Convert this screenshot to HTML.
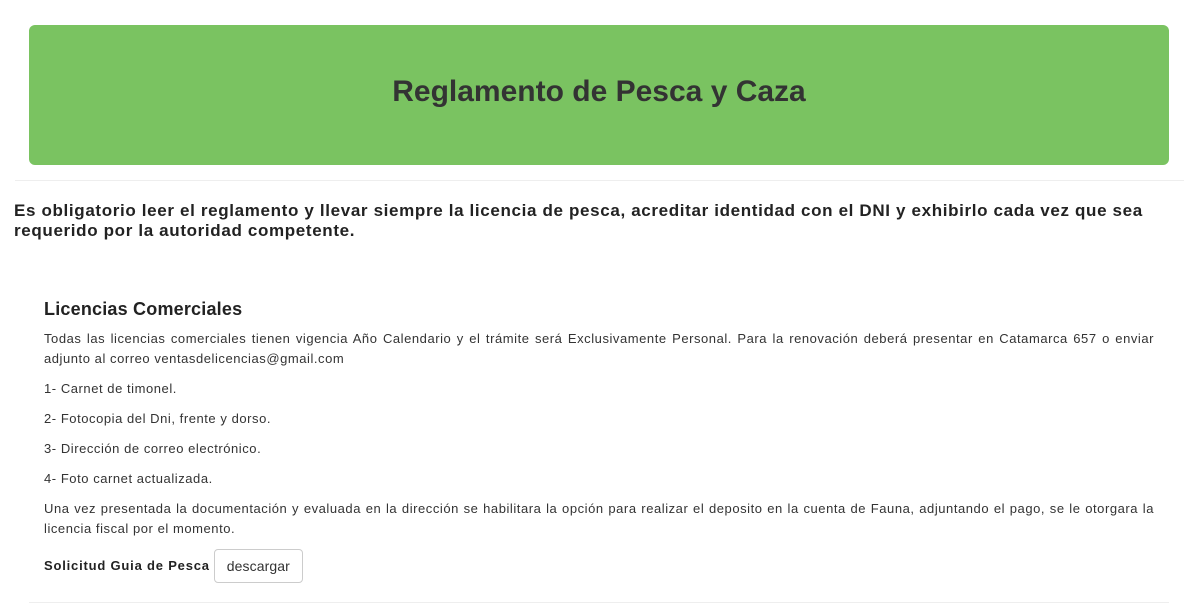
<!DOCTYPE html>
<html><head><meta charset="utf-8"><style>
*{margin:0;padding:0;box-sizing:border-box}
body{width:1191px;height:606px;overflow:hidden;background:#fff;font-family:"Liberation Sans",Arial,sans-serif;color:#333;position:relative}
.banner{position:absolute;left:29px;top:25px;width:1140px;height:140px;background:#7ac361;border-radius:6px;display:flex;align-items:center;justify-content:center}
.banner h1{font-size:30px;font-weight:bold;color:#333;margin-top:-6px;letter-spacing:0}
.hr1{position:absolute;left:15px;top:180px;width:1169px;border-top:1px solid #eee}
.warn{position:absolute;left:14px;top:201px;width:1165px;font-size:17px;font-weight:bold;line-height:20px;color:#222;letter-spacing:0.65px}
.sec{position:absolute;left:44px;top:298px;width:1110px;font-size:13px;line-height:20px;letter-spacing:0.55px}
.sec h2{font-size:18px;font-weight:bold;line-height:22px;margin-bottom:9px;color:#222;letter-spacing:0.2px}
.sec p{text-align:justify;margin-bottom:10px}
.row{display:flex;align-items:center;margin-top:0}
.row b{font-size:13px;color:#222;letter-spacing:0.8px}
.btn{margin-left:4px;border:1px solid #ccc;border-radius:4px;height:34px;padding:0 12px;display:flex;align-items:center;font-size:14px;color:#333;letter-spacing:0.1px}
.hr2{position:absolute;left:29px;top:602px;width:1140px;border-top:1px solid #eee}
</style></head><body>
<div class="banner"><h1>Reglamento de Pesca y Caza</h1></div>
<div class="hr1"></div>
<div class="warn">Es obligatorio leer el reglamento y llevar siempre la licencia de pesca, acreditar identidad con el DNI y exhibirlo cada vez que sea requerido por la autoridad competente.</div>
<div class="sec">
<h2>Licencias Comerciales</h2>
<p>Todas las licencias comerciales tienen vigencia Año Calendario y el trámite será Exclusivamente Personal. Para la renovación deberá presentar en Catamarca 657 o enviar adjunto al correo ventasdelicencias@gmail.com</p>
<p>1- Carnet de timonel.</p>
<p>2- Fotocopia del Dni, frente y dorso.</p>
<p>3- Dirección de correo electrónico.</p>
<p>4- Foto carnet actualizada.</p>
<p>Una vez presentada la documentación y evaluada en la dirección se habilitara la opción para realizar el deposito en la cuenta de Fauna, adjuntando el pago, se le otorgara la licencia fiscal por el momento.</p>
<div class="row"><b>Solicitud Guia de Pesca</b><span class="btn">descargar</span></div>
</div>
<div class="hr2"></div>
</body></html>
